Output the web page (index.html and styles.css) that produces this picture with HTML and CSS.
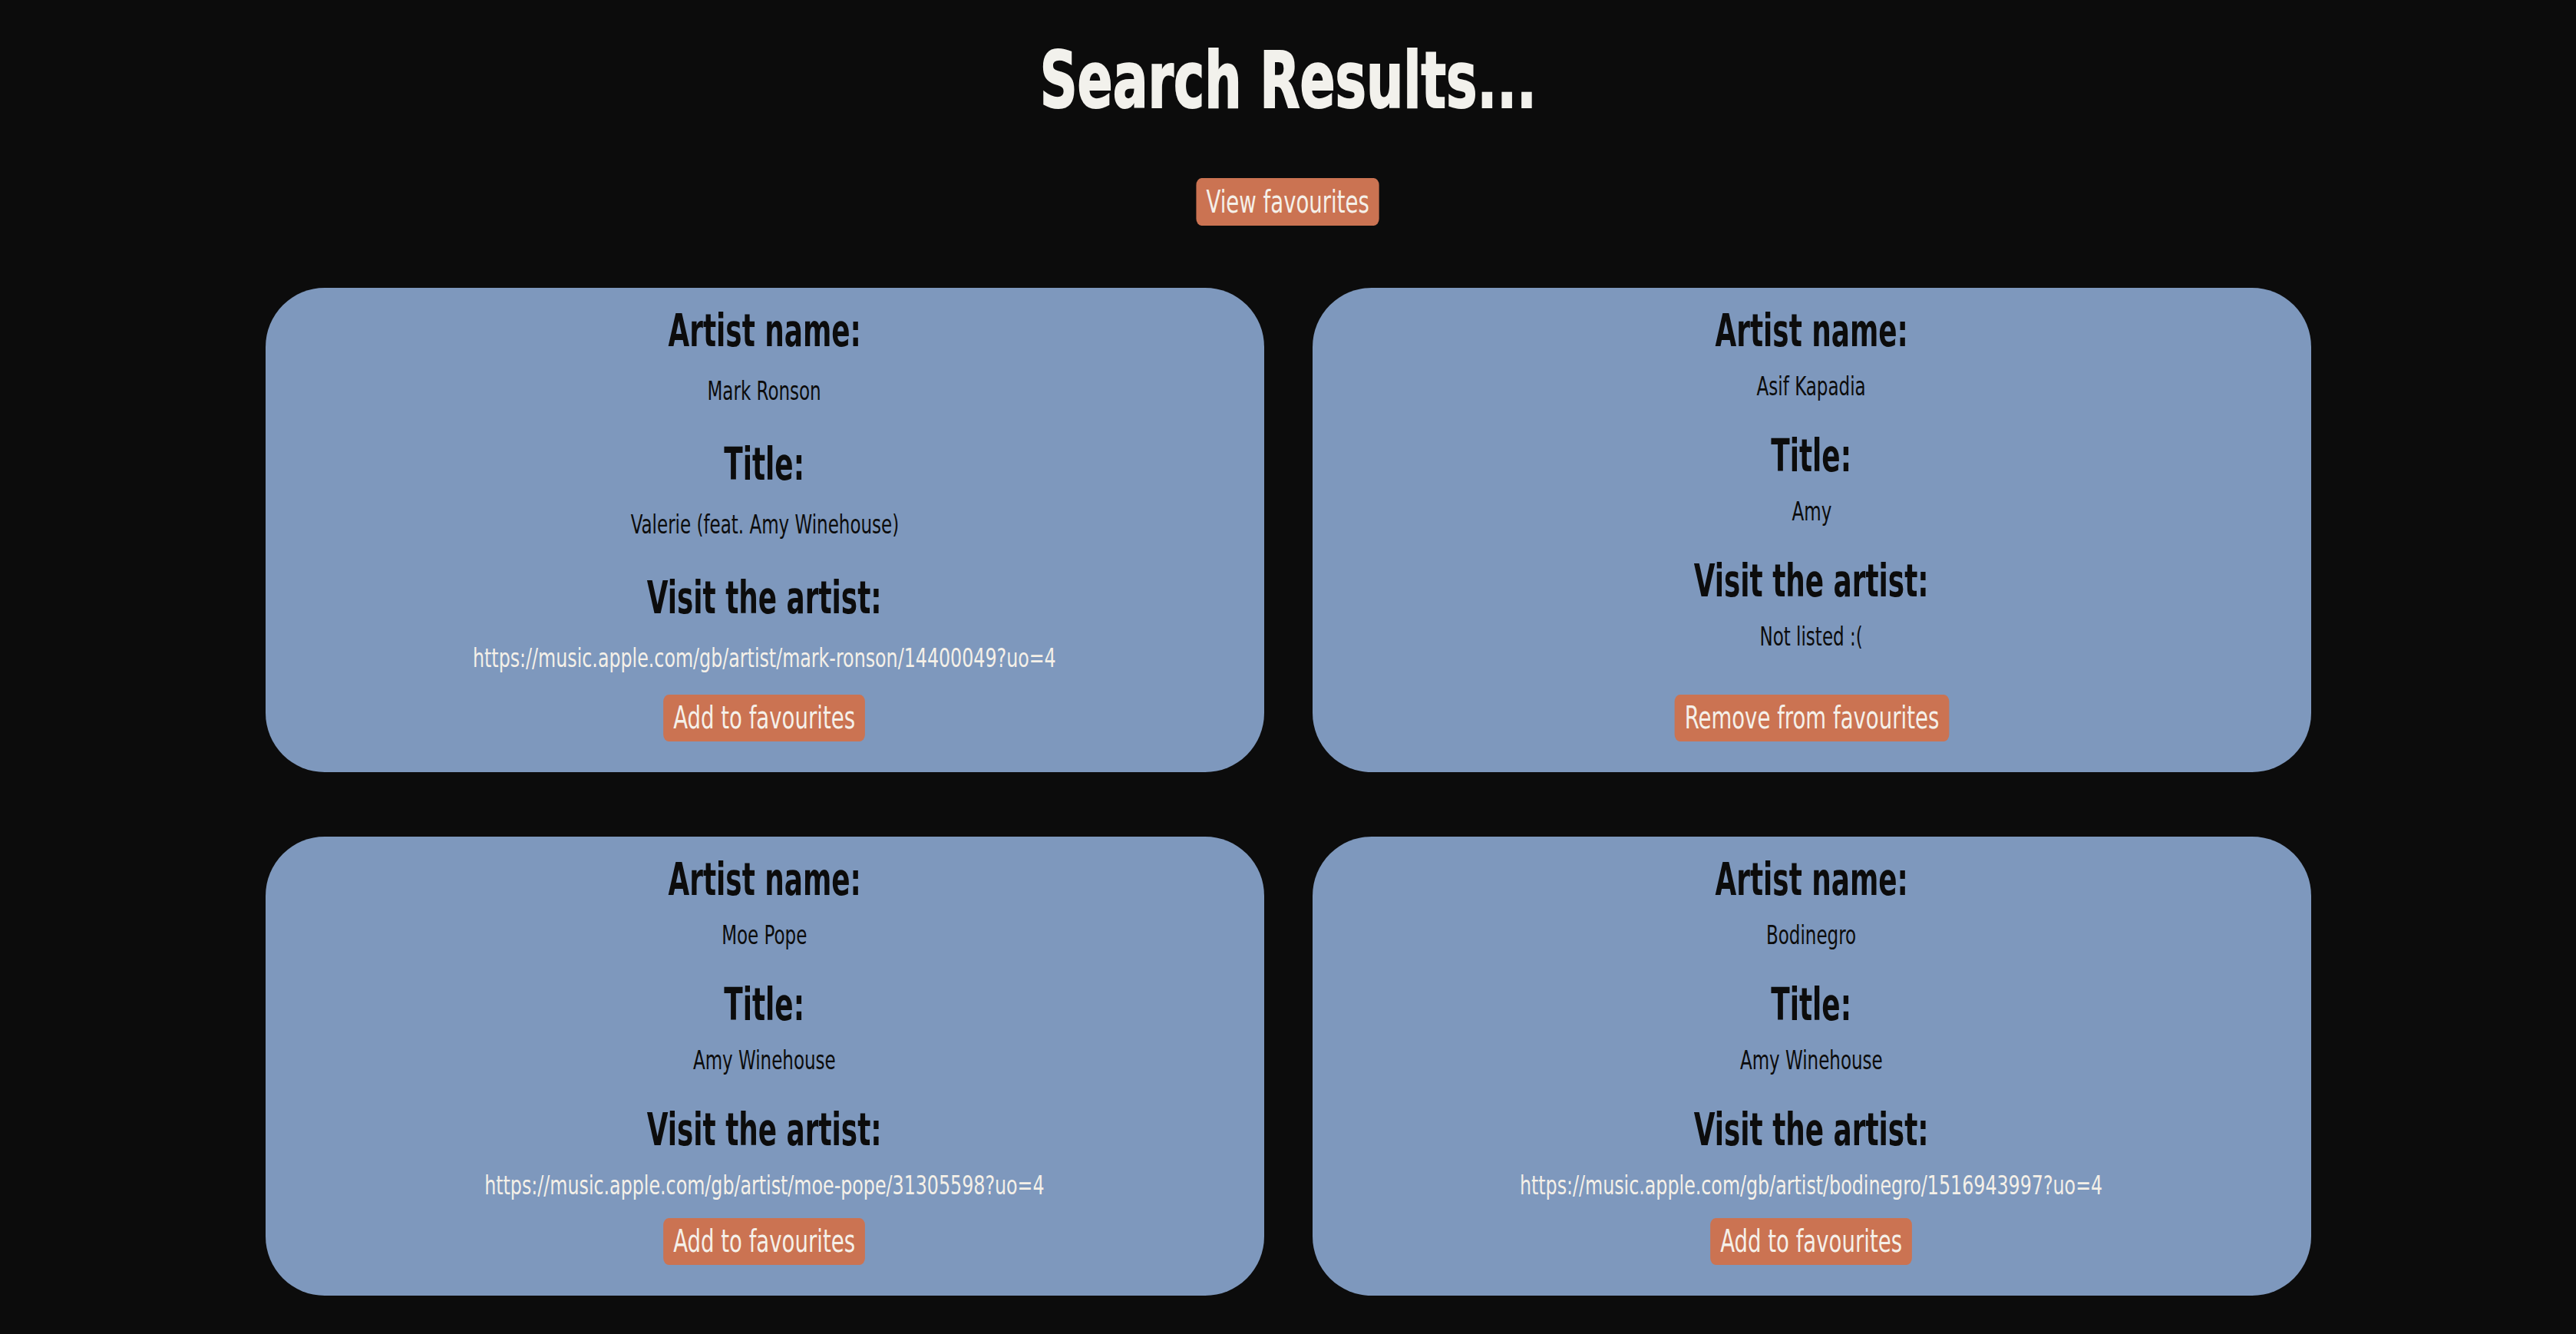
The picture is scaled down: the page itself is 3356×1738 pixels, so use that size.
FILE: index.html
```html
<!DOCTYPE html>
<html lang="en">
<head>
<meta charset="utf-8">
<title>Search Results</title>
<link rel="stylesheet" href="styles.css">
</head>
<body>
<main class="page">
  <h1 class="page-title">Search Results...</h1>
  <button class="btn btn-top" type="button">View favourites</button>

  <section class="results">
    <article class="card">
      <h2 class="label">Artist name:</h2>
      <p class="value">Mark Ronson</p>
      <h2 class="label">Title:</h2>
      <p class="value">Valerie (feat. Amy Winehouse)</p>
      <h2 class="label">Visit the artist:</h2>
      <p class="value value-link"><a class="link" href="#">https://music.apple.com/gb/artist/mark-ronson/14400049?uo=4</a></p>
      <button class="btn btn-card" type="button">Add to favourites</button>
    </article>

    <article class="card">
      <h2 class="label">Artist name:</h2>
      <p class="value">Asif Kapadia</p>
      <h2 class="label">Title:</h2>
      <p class="value">Amy</p>
      <h2 class="label">Visit the artist:</h2>
      <p class="value value-missing">Not listed :(</p>
      <button class="btn btn-card" type="button">Remove from favourites</button>
    </article>

    <article class="card">
      <h2 class="label">Artist name:</h2>
      <p class="value">Moe Pope</p>
      <h2 class="label">Title:</h2>
      <p class="value">Amy Winehouse</p>
      <h2 class="label">Visit the artist:</h2>
      <p class="value value-link"><a class="link" href="#">https://music.apple.com/gb/artist/moe-pope/31305598?uo=4</a></p>
      <button class="btn btn-card" type="button">Add to favourites</button>
    </article>

    <article class="card">
      <h2 class="label">Artist name:</h2>
      <p class="value">Bodinegro</p>
      <h2 class="label">Title:</h2>
      <p class="value">Amy Winehouse</p>
      <h2 class="label">Visit the artist:</h2>
      <p class="value value-link"><a class="link" href="#">https://music.apple.com/gb/artist/bodinegro/1516943997?uo=4</a></p>
      <button class="btn btn-card" type="button">Add to favourites</button>
    </article>
  </section>
</main>
</body>
</html>
```

FILE: styles.css
```css
html, body {
  margin: 0;
  padding: 0;
  background: #0c0c0c;
}

/* No condensed display face is installed, so the condensed look of the
   original typeface is approximated with DejaVu Sans Condensed, narrowed. */
body {
  font-family: "DejaVu Sans Condensed", "DejaVu Sans", sans-serif;
  color: #0c0c0c;
}

.page {
  display: flex;
  flex-direction: column;
  align-items: center;
  padding: 54px 0 40px;
}

.page-title {
  margin: 0;
  font-size: 102px;
  line-height: 102px;
  font-weight: 700;
  color: #f2f1ec;
  -webkit-text-stroke: 2px #f2f1ec;
  transform: scaleX(0.74);
}

.btn {
  font-family: inherit;
  border: none;
  background: #cb7352;
  color: #f5f0e9;
  border-radius: 9px;
  padding: 0 17px;
  font-size: 40px;
  cursor: pointer;
  transform: scaleX(0.766);
}

.btn-top {
  margin-top: 76px;
  height: 62px;
  line-height: 62px;
}

.results {
  margin-top: 81px;
  width: 2665px;
  display: grid;
  grid-template-columns: 1fr 1fr;
  column-gap: 63px;
  row-gap: 84px;
}

.card {
  background: #7e98bd;
  border-radius: 77px;
  padding: 24px 40px 40px;
  display: flex;
  flex-direction: column;
  align-items: center;
  justify-content: space-between;
  text-align: center;
}

.label {
  margin: 35px 0 0;
  font-size: 59px;
  line-height: 64px;
  font-weight: 700;
  transform: scaleX(0.675);
}

.label:first-child {
  margin-top: 0;
}

.value {
  margin: 18px 0 0;
  font-size: 33px;
  line-height: 46px;
  transform: scaleX(0.775);
}

.value-link {
  transform: scaleX(0.80);
}

.value-missing {
  margin-bottom: 33px;
}

.link {
  color: #f4f0e8;
  text-decoration: none;
}

.btn-card {
  margin-top: 19px;
  height: 61px;
  line-height: 61px;
}
```
